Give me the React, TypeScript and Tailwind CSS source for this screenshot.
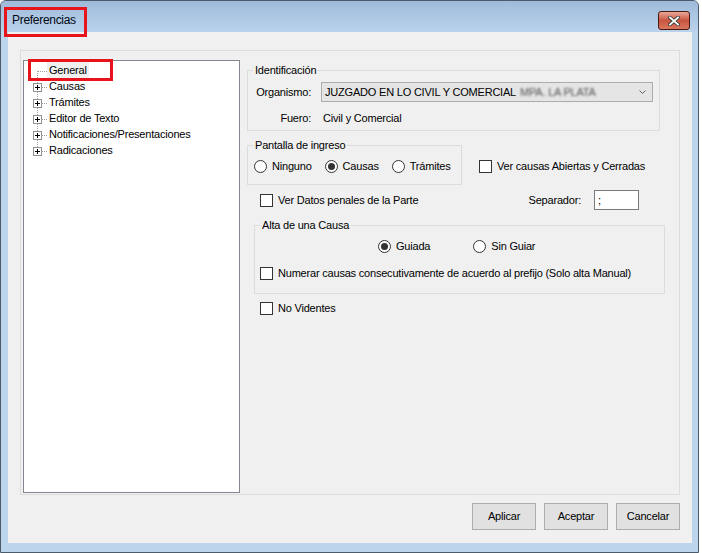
import React from "react";

const treeItems = [
  "General",
  "Causas",
  "Trámites",
  "Editor de Texto",
  "Notificaciones/Presentaciones",
  "Radicaciones",
];

function Check({ label, className = "" }: { label: string; className?: string }) {
  return (
    <div className={`flex items-center gap-[5px] h-[13px] ${className}`}>
      <span className="w-[13px] h-[13px] border border-[#333333] bg-white shrink-0" />
      <span className="leading-[13px] whitespace-nowrap">{label}</span>
    </div>
  );
}

function Radio({ label, checked = false }: { label: string; checked?: boolean }) {
  return (
    <div className="flex items-center gap-[5px] h-[13px]">
      <span className="w-[13px] h-[13px] rounded-full border border-[#333333] bg-white shrink-0 flex items-center justify-center">
        {checked && <span className="w-[7px] h-[7px] rounded-full bg-[#333333]" />}
      </span>
      <span className="leading-[13px] whitespace-nowrap">{label}</span>
    </div>
  );
}

function TreeRow({ text, index, last }: { text: string; index: number; last: boolean }) {
  const first = index === 0;
  return (
    <div className="flex h-[16px]">
      <svg width="23" height="16" className="shrink-0">
        <line x1="13.5" x2="13.5" y1={first ? 9 : 0} y2={last ? 10 : 16} stroke="#a0a0a0" strokeDasharray="1 1" />
        <line x1="14" x2="23" y1="9.5" y2="9.5" stroke="#a0a0a0" strokeDasharray="1 1" />
        {!first && (
          <>
            <rect x="9.5" y="5.5" width="8" height="8" fill="#ffffff" stroke="#919191" />
            <line x1="11" x2="16" y1="9.5" y2="9.5" stroke="#000000" />
            <line x1="13.5" x2="13.5" y1="7" y2="12" stroke="#000000" />
          </>
        )}
      </svg>
      <span className={`px-[2px] leading-[16px] whitespace-nowrap ${first ? "bg-[#f0f0f0]" : ""}`}>{text}</span>
    </div>
  );
}

export default function App() {
  return (
    <div className="w-[702px] h-[553px] bg-white">
      <div className="relative w-[699px] h-[553px] flex flex-col bg-[#bcd4ec] border border-[#4b5a6b] rounded-t-[6px] font-['Liberation_Sans',Arial,sans-serif] text-[11px] tracking-[-0.2px] text-black overflow-hidden">
        {/* barra de título */}
        <div className="h-[31px] flex items-start justify-between bg-linear-to-b from-[#9fbbda] to-[#bad2eb] rounded-t-[5px]">
          <span className="pl-[11px] pt-[12px] text-[12px] leading-[14px] tracking-[-0.3px] text-[#000814]">Preferencias</span>
          <div className="mt-[10px] mr-[8px] w-[32px] h-[19px] rounded-[3px] border border-[#4a1612] bg-linear-to-b from-[#e8a898] via-[#c8543e] to-[#d8775f] flex items-center justify-center">
            <svg width="12" height="10" viewBox="0 0 12 10">
              <path d="M2 1.5 L10 8.5 M10 1.5 L2 8.5" stroke="#3a3a3a" strokeWidth="3.6" strokeLinecap="square" />
              <path d="M2 1.5 L10 8.5 M10 1.5 L2 8.5" stroke="#ffffff" strokeWidth="1.8" strokeLinecap="square" />
            </svg>
          </div>
        </div>

        {/* área cliente */}
        <div className="ml-[7px] w-[684px] h-[511px] bg-[#f0f0f0] flex flex-col">
          <div className="ml-[12px] mt-[18px] w-[660px] h-[445px] border border-[#dcdcdc] flex">
            {/* árbol */}
            <div className="ml-[2px] mt-[9px] w-[217px] h-[433px] border border-[#828790] bg-white pt-[1px] shrink-0">
              {treeItems.map((t, i) => (
                <TreeRow key={t} text={t} index={i} last={i === treeItems.length - 1} />
              ))}
            </div>

            {/* opciones */}
            <div className="ml-[7px] mt-[12px] w-[418px] flex flex-col">
              <fieldset className="w-[413px] border border-[#dcdcdc] pb-[5px]">
                <legend className="ml-[5px] px-[2px] leading-[14px]">Identificación</legend>
                <div className="flex items-center mt-[5px] h-[20px]">
                  <span className="w-[63px] text-right">Organismo:</span>
                  <div className="ml-[10px] w-[332px] h-[20px] border border-[#acacac] bg-[#e5e5e5] flex items-center pl-[3px] pr-[6px]">
                    <span className="whitespace-nowrap">JUZGADO EN LO CIVIL Y COMERCIAL</span>
                    <span className="ml-[4px] whitespace-nowrap blur-[1.3px] text-[#555555]">MPA. LA PLATA</span>
                    <svg width="7" height="4" className="ml-auto">
                      <polyline points="0.5,0.5 3.5,3.5 6.5,0.5" fill="none" stroke="#606060" />
                    </svg>
                  </div>
                </div>
                <div className="flex mt-[10px] h-[13px] leading-[13px]">
                  <span className="w-[63px] text-right">Fuero:</span>
                  <span className="ml-[12px]">Civil y Comercial</span>
                </div>
              </fieldset>

              <div className="flex items-start mt-[7px]">
                <fieldset className="w-[215px] border border-[#dcdcdc] pb-[11px]">
                  <legend className="ml-[5px] px-[2px] leading-[14px]">Pantalla de ingreso</legend>
                  <div className="flex gap-[13px] pl-[6px] mt-[8px]">
                    <Radio label="Ninguno" />
                    <Radio label="Causas" checked />
                    <Radio label="Trámites" />
                  </div>
                </fieldset>
                <Check label="Ver causas Abiertas y Cerradas" className="ml-[17px] mt-[22px]" />
              </div>

              <div className="flex items-center h-[20px] mt-[5px]">
                <Check label="Ver Datos penales de la Parte" className="ml-[13px]" />
                <div className="ml-auto mr-[26px] flex items-center gap-[13px]">
                  <span>Separador:</span>
                  <div className="w-[45px] h-[20px] border border-[#7a7a7a] bg-white pl-[3px] leading-[18px]">;</div>
                </div>
              </div>

              <fieldset className="ml-[7px] mt-[8px] w-[411px] border border-[#dcdcdc] pb-[13px]">
                <legend className="ml-[5px] px-[2px] leading-[14px]">Alta de una Causa</legend>
                <div className="flex gap-[43px] pl-[123px] mt-[8px]">
                  <Radio label="Guiada" checked />
                  <Radio label="Sin Guiar" />
                </div>
                <Check label="Numerar causas consecutivamente de acuerdo al prefijo (Solo alta Manual)" className="ml-[5px] mt-[14px]" />
              </fieldset>

              <Check label="No Videntes" className="ml-[13px] mt-[8px]" />
            </div>
          </div>

          {/* botones */}
          <div className="mt-[8px] flex justify-end gap-[8px] pr-[12px]">
            {["Aplicar", "Aceptar", "Cancelar"].map((b) => (
              <button key={b} className="w-[64px] h-[27px] border border-[#adadad] bg-[#e1e1e1] text-center leading-[25px]">
                {b}
              </button>
            ))}
          </div>
        </div>

        {/* marcas rojas */}
        <div className="absolute left-[3px] top-[6px] w-[83px] h-[30px] border-[3px] border-[#e8141c]" />
        <div className="absolute left-[27px] top-[58px] w-[85px] h-[22px] border-[3px] border-[#e8141c]" />
      </div>
    </div>
  );
}
